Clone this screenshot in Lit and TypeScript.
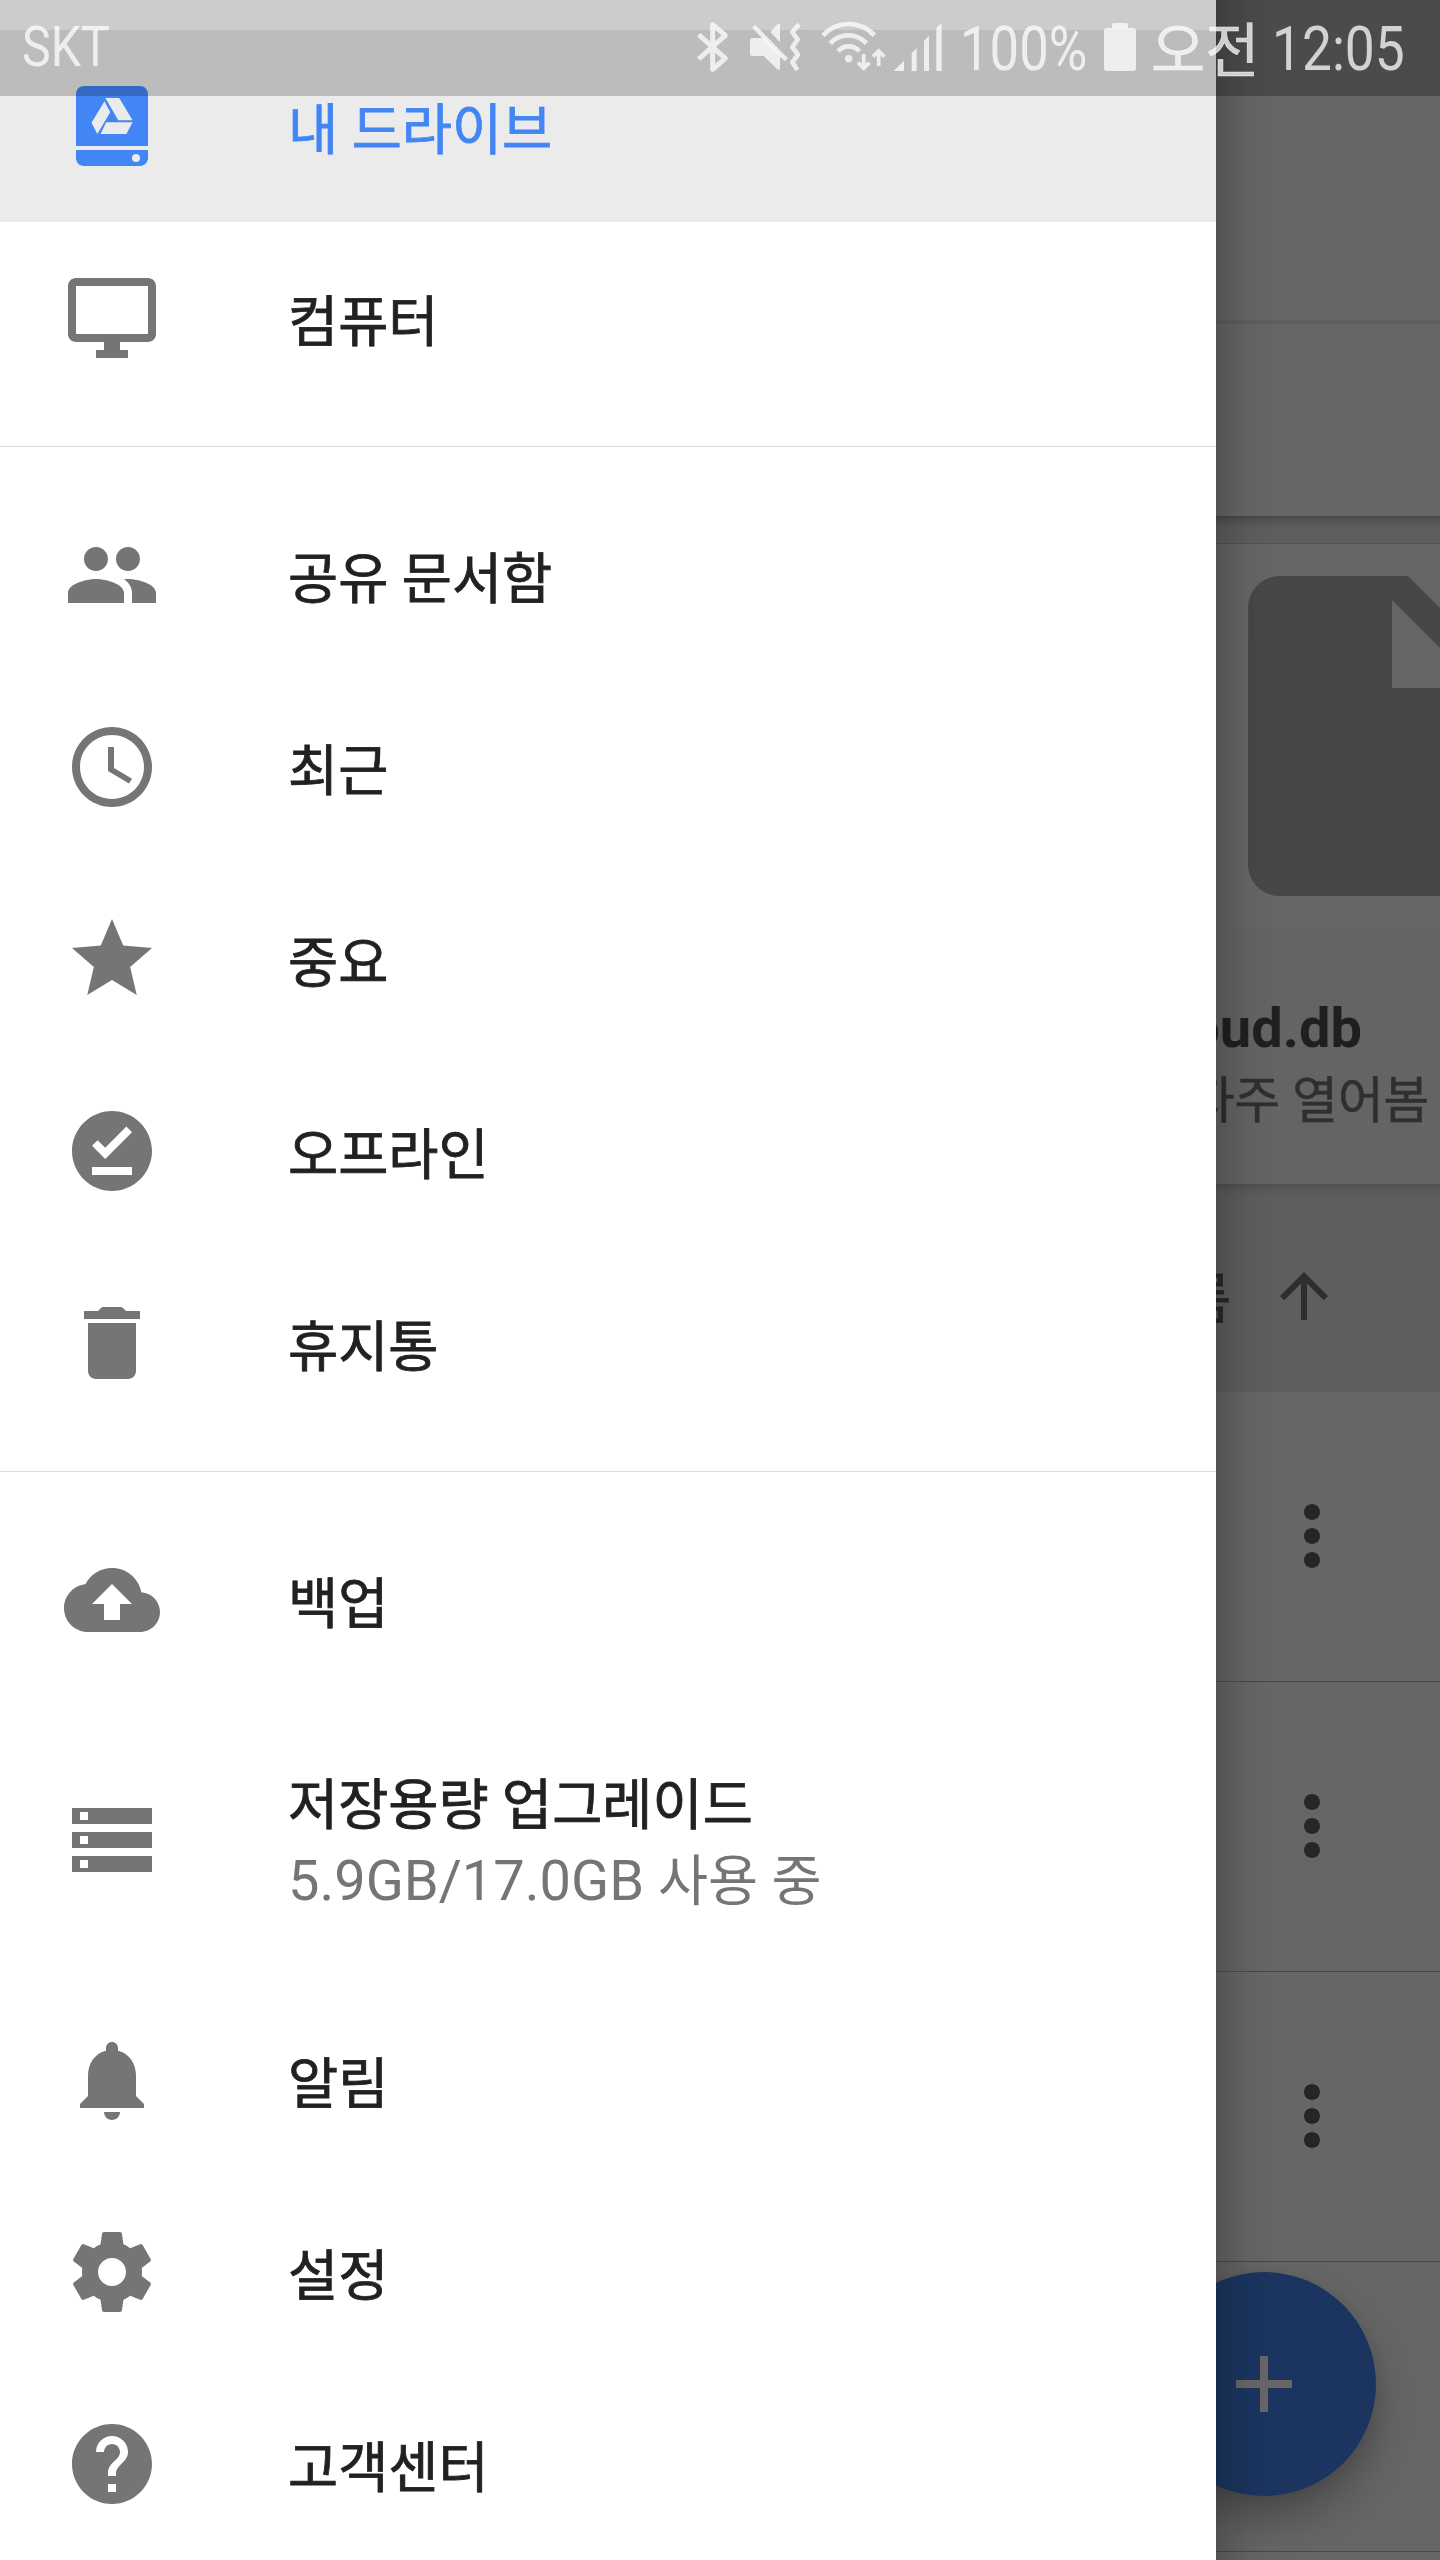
import { LitElement, html, css, svg, nothing } from "lit";
import { customElement, property } from "lit/decorators.js";
import { classMap } from "lit/directives/class-map.js";

const icons: Record<string, unknown> = {
  drive: svg`<path fill-rule="evenodd" d="M5 2h14c1.1 0 2 .9 2 2v13H3V4c0-1.1.9-2 2-2zM10.12 5.83 6.88 11.17 8.33 14 11.57 8.58zM10.34 5l3.23 5.58h3.58L13.8 5zM10.56 11.08 9.1 14h6.5l1.55-2.92z"/><path fill-rule="evenodd" d="M3 18h18v2c0 1.1-.9 2-2 2H5c-1.1 0-2-.9-2-2zM18 19a1 1 0 1 0 0 2 1 1 0 0 0 0-2z"/>`,
  computer: svg`<path d="M21 2H3c-1.1 0-2 .9-2 2v12c0 1.1.9 2 2 2h7v2H8v2h8v-2h-2v-2h7c1.1 0 2-.9 2-2V4c0-1.1-.9-2-2-2zm0 14H3V4h18v12z"/>`,
  people: svg`<path d="M16 11c1.66 0 2.99-1.34 2.99-3S17.66 5 16 5c-1.66 0-3 1.34-3 3s1.34 3 3 3zm-8 0c1.66 0 2.99-1.34 2.99-3S9.66 5 8 5C6.34 5 5 6.34 5 8s1.34 3 3 3zm0 2c-2.33 0-7 1.17-7 3.5V19h14v-2.5c0-2.33-4.67-3.5-7-3.5zm8 0c-.29 0-.62.02-.97.05 1.16.84 1.97 1.97 1.97 3.45V19h6v-2.5c0-2.33-4.67-3.5-7-3.5z"/>`,
  clock: svg`<path d="M11.99 2C6.47 2 2 6.48 2 12s4.47 10 9.99 10C17.52 22 22 17.52 22 12S17.52 2 11.99 2zM12 20c-4.42 0-8-3.58-8-8s3.58-8 8-8 8 3.58 8 8-3.58 8-8 8z"/><path d="M12.5 7H11v6l5.25 3.15.75-1.23-4.5-2.67z"/>`,
  star: svg`<path d="M12 17.27L18.18 21l-1.64-7.03L22 9.24l-7.19-.61L12 2 9.19 8.63 2 9.24l5.46 4.73L5.82 21z"/>`,
  offline: svg`<path d="M12 2C6.5 2 2 6.5 2 12s4.5 10 10 10 10-4.5 10-10S17.5 2 12 2zm5 16H7v-2h10v2zm-6.7-4L7 10.7l1.4-1.4 1.9 1.9 5.3-5.3L17 7.3 10.3 14z"/>`,
  trash: svg`<path d="M6 19c0 1.1.9 2 2 2h8c1.1 0 2-.9 2-2V7H6v12zM19 4h-3.5l-.7-.7c-.2-.2-.5-.3-.7-.3H9.9c-.3 0-.5.1-.7.3l-.7.7H5v2h14V4z"/>`,
  backup: svg`<path d="M19.35 10.04C18.67 6.59 15.64 4 12 4 9.11 4 6.6 5.64 5.35 8.04 2.34 8.36 0 10.91 0 14c0 3.31 2.69 6 6 6h13c2.76 0 5-2.24 5-5 0-2.64-2.05-4.78-4.65-4.96zM14 13v4h-4v-4H7l5-5 5 5h-3z"/>`,
  storage: svg`<path d="M2 20h20v-4H2v4zm2-3h2v2H4v-2zM2 4v4h20V4H2zm4 3H4V5h2v2zm-4 7h20v-4H2v4zm2-3h2v2H4v-2z"/>`,
  bell: svg`<path d="M12 22c1.1 0 2-.9 2-2h-4c0 1.1.89 2 2 2zm6-6v-5c0-3.07-1.64-5.64-4.5-6.32V4c0-.83-.67-1.5-1.5-1.5s-1.5.67-1.5 1.5v.68C7.63 5.36 6 7.92 6 11v5l-2 2v1h16v-1l-2-2z"/>`,
  gear: svg`<path d="M19.43 12.98c.04-.32.07-.64.07-.98s-.03-.66-.07-.98l2.11-1.65c.19-.15.24-.42.12-.64l-2-3.46c-.12-.22-.39-.3-.61-.22l-2.49 1c-.52-.4-1.08-.73-1.69-.98l-.38-2.65C14.46 2.18 14.25 2 14 2h-4c-.25 0-.46.18-.49.42l-.38 2.65c-.61.25-1.17.59-1.69.98l-2.49-1c-.23-.09-.49 0-.61.22l-2 3.46c-.13.22-.07.49.12.64l2.11 1.65c-.04.32-.07.65-.07.98s.03.66.07.98l-2.11 1.65c-.19.15-.24.42-.12.64l2 3.46c.12.22.39.3.61.22l2.49-1c.52.4 1.08.73 1.69.98l.38 2.65c.03.24.24.42.49.42h4c.25 0 .46-.18.49-.42l.38-2.65c.61-.25 1.17-.59 1.69-.98l2.49 1c.23.09.49 0 .61-.22l2-3.46c.12-.22.07-.49-.12-.64l-2.11-1.65zM12 15.5c-1.93 0-3.5-1.57-3.5-3.5s1.57-3.5 3.5-3.5 3.5 1.57 3.5 3.5-1.57 3.5-3.5 3.5z"/>`,
  help: svg`<path fill-rule="evenodd" d="M12 2C6.48 2 2 6.48 2 12s4.48 10 10 10 10-4.48 10-10S17.52 2 12 2zM11 17h2v2h-2zM12 5c-2.21 0-4 1.79-4 4h2c0-1.1.9-2 2-2s2 .9 2 2c0 2-3 2.6-3 5.3V15h2v-.7c0-2 3-2.8 3-5.3 0-2.21-1.79-4-4-4z"/>`,
  file: svg`<path d="M6 2c-1.1 0-1.99.9-1.99 2L4 20c0 1.1.89 2 1.99 2H18c1.1 0 2-.9 2-2V8l-6-6H6zm7 7V3.5L18.5 9H13z"/>`,
  arrowUp: svg`<path d="M4 12l1.41 1.41L11 7.83V20h2V7.83l5.58 5.59L20 12l-8-8-8 8z"/>`,
  more: svg`<path d="M12 8c1.1 0 2-.9 2-2s-.9-2-2-2-2 .9-2 2 .9 2 2 2zm0 2c-1.1 0-2 .9-2 2s.9 2 2 2 2-.9 2-2-.9-2-2-2zm0 6c-1.1 0-2 .9-2 2s.9 2 2 2 2-.9 2-2-.9-2-2-2z"/>`,
  plus: svg`<path d="M19 13h-6v6h-2v-6H5v-2h6V5h2v6h6v2z"/>`,
};

@customElement("material-icon")
class MaterialIcon extends LitElement {
  @property() name = "";
  static styles = css`
    :host { display: block; flex: none; }
    .glyph { display: block; width: 100%; height: 100%; fill: currentColor; }
  `;
  render() {
    return html`<svg class="glyph" viewBox="0 0 24 24">${icons[this.name]}</svg>`;
  }
}

@customElement("status-bar")
class StatusBar extends LitElement {
  static styles = css`
    :host {
      display: flex; width: 1440px; height: 96px; box-sizing: border-box; padding-left: 22px;
      background: rgba(0, 0, 0, 0.2); color: rgba(255, 255, 255, 0.75);
      font-family: Roboto, "Noto Sans CJK KR", sans-serif; white-space: nowrap;
    }
    .text { flex: none; height: 96px; line-height: 96px; }
    .squeeze { display: inline-block; transform-origin: 0 50%; }
    .carrier { width: 658px; font-size: 55.5px; }
    .carrier .squeeze { transform: scaleX(0.87); }
    .icons { flex: none; display: block; width: 280px; height: 76px; margin-top: 10px; fill: currentColor; }
    .line { fill: none; stroke: currentColor; }
    .percent { width: 144px; font-size: 62px; line-height: 98px; }
    .percent .squeeze { transform: scaleX(0.85); }
    .battery { flex: none; display: block; width: 32px; height: 48px; margin-top: 23px; fill: currentColor; }
    .half { width: 121px; margin-left: 15px; font: 400 59px/93px "Noto Sans CJK KR", sans-serif; -webkit-text-stroke: 0.6px currentColor; }
    .clock { font-size: 62px; line-height: 98px; }
    .clock .squeeze { transform: scaleX(0.86); }
  `;
  render() {
    return html`
      <div class="text carrier"><span class="squeeze">SKT</span></div>
      <svg class="icons" viewBox="0 0 840 228">
        <path class="line" stroke-width="15" stroke-linejoin="round" d="M56 74 136 145 98 178V44L136 76 56 147"/>
        <path d="M217 84H252L306 140 300 145V174Q300 184 291 177L251 138H217Q210 138 210 131V91Q210 84 217 84zM271 66 291 44Q300 37 300 46V97z"/>
        <path class="line" stroke-width="13" d="M221 49 319 149"/>
        <path class="line" stroke-width="14" stroke-linejoin="round" d="M357 43 337 66 353 89 337 111 354 134 337 157 352 180"/>
        <path class="line" stroke-width="14" d="M429 76A104 104 0 0 1 583 76M451 100A73 73 0 0 1 559 100M474 124A42 42 0 0 1 538 124"/>
        <circle cx="506" cy="146" r="11"/>
        <path class="line" stroke-width="11" d="M551 132V174M534 158 551 175 568 158M596 168V124M579 140 596 123 613 140"/>
        <path d="M641 183 672 152V183zM695 183V130L710 114V183zM732 183V92L747 77V183zM769 183V53L785 38V183z"/>
      </svg>
      <div class="text percent"><span class="squeeze">100%</span></div>
      <svg class="battery" viewBox="0 0 32 48"><path d="M8 2q0-2 2-2h12q2 0 2 2v3h5q3 0 3 3v37q0 3-3 3H3q-3 0-3-3V8q0-3 3-3h5z"/></svg>
      <div class="text half">오전</div>
      <div class="text clock"><span class="squeeze">12:05</span></div>
    `;
  }
}

interface Entry { icon: string; label: string; used?: string; suffix?: string; active?: boolean; }

const groups: Entry[][] = [
  [
    { icon: "drive", label: "내 드라이브", active: true },
    { icon: "computer", label: "컴퓨터" },
  ],
  [
    { icon: "people", label: "공유 문서함" },
    { icon: "clock", label: "최근" },
    { icon: "star", label: "중요" },
    { icon: "offline", label: "오프라인" },
    { icon: "trash", label: "휴지통" },
  ],
  [
    { icon: "backup", label: "백업" },
    { icon: "storage", label: "저장용량 업그레이드", used: "5.9GB/17.0GB", suffix: "사용 중" },
    { icon: "bell", label: "알림" },
    { icon: "gear", label: "설정" },
    { icon: "help", label: "고객센터" },
  ],
];

@customElement("nav-drawer")
class NavDrawer extends LitElement {
  static styles = css`
    :host {
      display: block; box-sizing: border-box; width: 1216px; height: 2560px; padding-top: 30px;
      background: #fff; font-family: Roboto, "Noto Sans CJK KR", sans-serif;
    }
    .group + .group { margin-top: 32px; border-top: 1px solid #dadada; padding-top: 32px; }
    .row { display: flex; align-items: center; height: 192px; padding-left: 64px; color: #757575; }
    .row.tall { height: 288px; }
    .row.active { background: #ebebeb; color: #4285f4; }
    .icon { width: 96px; height: 96px; margin-right: 128px; }
    .label {
      font-size: 54.5px; line-height: 76px; color: #212121; white-space: nowrap; padding-top: 7px;
      -webkit-text-stroke: 0.8px currentColor;
    }
    .active .label { color: #4285f4; }
    .detail { font-size: 56px; line-height: 76px; color: #757575; white-space: nowrap; }
    .suffix { font-size: 54.4px; }
  `;
  render() {
    return groups.map((group) => html`
      <div class="group">
        ${group.map((e) => html`
          <div class=${classMap({ row: true, active: !!e.active, tall: !!e.used })}>
            <material-icon class="icon" name=${e.icon}></material-icon>
            <div>
              <div class="label">${e.label}</div>
              ${e.used ? html`<div class="detail">${e.used} <span class="suffix">${e.suffix}</span></div>` : nothing}
            </div>
          </div>`)}
      </div>`);
  }
}

@customElement("file-browser")
class FileBrowser extends LitElement {
  static styles = css`
    :host {
      display: flex; flex-direction: column; width: 1440px; height: 2560px; background: #666;
      font-family: Roboto, "Noto Sans CJK KR", sans-serif; white-space: nowrap;
    }
    .statusbg { flex: none; height: 96px; background: #5e5e5e; }
    .toolbar { flex: none; height: 224px; border-bottom: 4px solid #5e5e5e; }
    .section { flex: none; height: 192px; }
    .gap { flex: none; height: 27px; background: linear-gradient(#484848, #545454 5px, #5c5c5c 11px, #5e5e5e 16px); border-bottom: 1px solid #535353; }
    .card { flex: none; height: 640px; display: flex; flex-direction: column; }
    .preview { flex: none; height: 384px; padding-left: 1184px; color: #474747; overflow: hidden; }
    .file { width: 384px; height: 384px; }
    .meta { flex: 1; background: #646464; display: flex; flex-direction: column; align-items: flex-end; padding-top: 65px; }
    .title { font-size: 56px; line-height: 70px; font-weight: 700; color: #1f1f1f; margin-right: 78px; }
    .reason { font-size: 49.5px; line-height: 70px; color: #2f2f2f; margin: 3px 11px 0 0; -webkit-text-stroke: 0.5px currentColor; }
    .sort {
      flex: none; height: 208px; display: flex; align-items: center; justify-content: flex-end; box-sizing: border-box;
      padding-right: 100px; gap: 37px; font-size: 54.4px; color: #282828;
      background: linear-gradient(#505050, #5b5b5b 8px, #5e5e5e 16px);
    }
    .arrow { width: 72px; height: 72px; color: #2e2e2e; margin-top: 16px; }
    .sortlabel { margin-top: 13px; -webkit-text-stroke: 0.8px currentColor; }
    .item {
      flex: none; box-sizing: border-box; height: 290px; border-bottom: 1px solid #4a4a4a;
      display: flex; align-items: center; justify-content: flex-end; padding: 0 80px 1px 0;
    }
    .more { width: 96px; height: 96px; color: #262626; }
  `;
  render() {
    return html`
      <div class="statusbg"></div>
      <div class="toolbar"></div>
      <div class="section"></div>
      <div class="gap"></div>
      <div class="card">
        <div class="preview"><material-icon class="file" name="file"></material-icon></div>
        <div class="meta">
          <div class="title">cloud.db</div>
          <div class="reason">자주 열어봄</div>
        </div>
      </div>
      <div class="sort"><span class="sortlabel">이름</span><material-icon class="arrow" name="arrowUp"></material-icon></div>
      ${[0, 1, 2, 3].map((i) => html`<div class="item">${i < 3 ? html`<material-icon class="more" name="more"></material-icon>` : nothing}</div>`)}
    `;
  }
}

@customElement("app-root")
class AppRoot extends LitElement {
  static styles = css`
    :host { display: block; position: relative; width: 1440px; height: 2560px; overflow: hidden; }
    .fab {
      position: absolute; left: 1152px; top: 2272px; width: 224px; height: 224px; border-radius: 50%;
      display: flex; align-items: center; justify-content: center; background: #1b3560; color: #666;
      box-shadow: 0 24px 44px rgba(0, 0, 0, 0.28), 0 4px 14px rgba(0, 0, 0, 0.08);
    }
    .plus { width: 96px; height: 96px; }
    .shade {
      position: absolute; left: 1216px; top: 0; width: 60px; height: 2560px;
      background: linear-gradient(90deg, rgba(0, 0, 0, 0.19), rgba(0, 0, 0, 0.11) 16px, rgba(0, 0, 0, 0.04) 34px, transparent);
    }
    .drawer { position: absolute; left: 0; top: 0; }
    .status { position: absolute; left: 0; top: 0; }
  `;
  render() {
    return html`
      <file-browser></file-browser>
      <div class="fab"><material-icon class="plus" name="plus"></material-icon></div>
      <div class="shade"></div>
      <nav-drawer class="drawer"></nav-drawer>
      <status-bar class="status"></status-bar>
    `;
  }
}
